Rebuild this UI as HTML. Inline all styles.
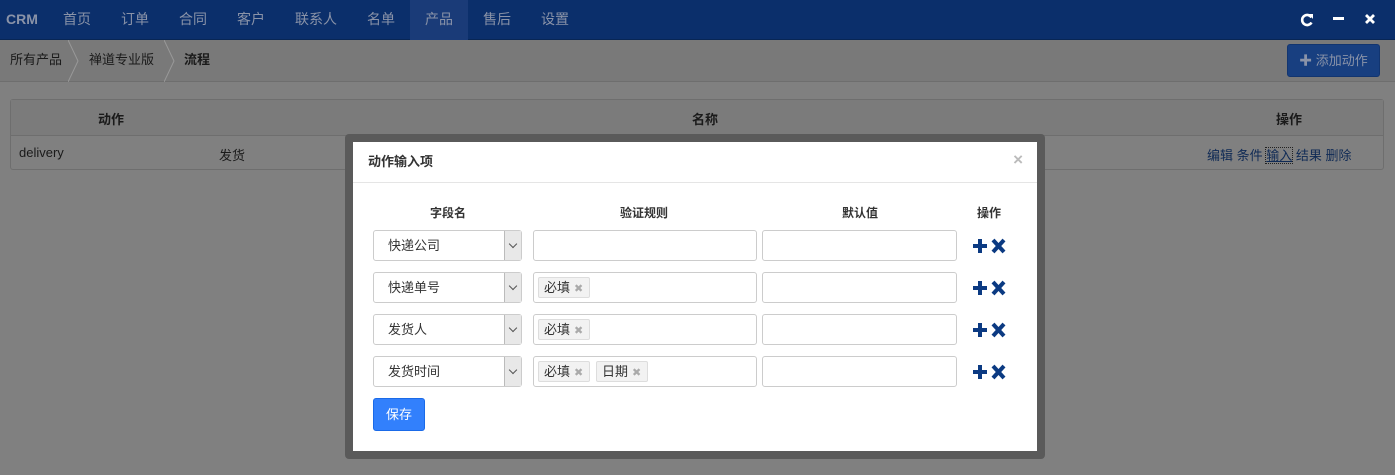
<!DOCTYPE html>
<html><head><meta charset="utf-8"><style>
*{box-sizing:border-box;margin:0;padding:0}
body{width:1395px;height:475px;overflow:hidden;position:relative;background:#808080;font-family:"Liberation Sans","Noto Sans CJK SC",sans-serif;font-size:13px;color:#1a1a1a}
.nav{position:absolute;left:0;top:0;width:1395px;height:40px;background:#0b2f6b;border-bottom:1px solid #082655}
.nav span{position:absolute;top:0;line-height:38px;font-size:14px;color:#8a93a8}
.bc{position:absolute;left:0;top:40px;width:1395px;height:42px;background:#797979;border-bottom:1px solid #6e6e6e}
.bc span{position:absolute;top:0;line-height:40px;font-size:13px}
.tbl{position:absolute;left:10px;top:99px;width:1374px;height:71px;border:1px solid #6e6e6e;border-radius:3px;background:#808080}
.tbl .h{height:36px;border-bottom:1px solid #6e6e6e;background:#7b7b7b}
.tbl b,.tbl i{position:absolute;font-style:normal}
.mw{position:absolute;left:345px;top:134px;width:700px;height:325px;background:#5a5a5a;border-radius:4px}
.m{position:absolute;left:353px;top:142px;width:684px;height:309px;background:#fff;color:#333}
.m .hd{height:41px;border-bottom:1px solid #e5e5e5;font-weight:bold;padding-left:15px;line-height:40px}
.ab{position:absolute}
.th{position:absolute;top:62px;font-weight:bold;font-size:12px}
.sel,.inp{position:absolute;height:31px;border:1px solid #ccc;border-radius:3px;background:#fff}
.sel span{position:absolute;left:14px;line-height:29px}
.sel i{position:absolute;right:0;top:0;width:17px;height:29px;background:#e8e8e8;border-left:1px solid #bbb}
.sel i:after{content:"";position:absolute;left:5px;top:10px;width:5px;height:5px;border-right:1px solid #555;border-bottom:1px solid #555;transform:rotate(45deg)}
.tag{position:absolute;top:4px;height:21px;line-height:19px;padding:0 6px 0 5px;background:#f2f2f2;border:1px solid #ddd;border-radius:2px;font-size:13px}
.tag em{font-style:normal;color:#aaa;margin-left:4px;font-size:11px}
.ic{position:absolute;left:620px}
</style></head><body>
<div class="nav">
<span style="left:6px;font-weight:bold;color:#8a93a8">CRM</span>
<span style="left:63px">首页</span><span style="left:121px">订单</span><span style="left:179px">合同</span><span style="left:237px">客户</span><span style="left:295px">联系人</span><span style="left:367px">名单</span>
<div style="position:absolute;left:410px;top:0;width:58px;height:40px;background:#1a3b78"></div>
<span style="left:425px">产品</span><span style="left:483px">售后</span><span style="left:541px">设置</span>
<svg style="position:absolute;left:1300px;top:13px" width="14" height="14"><path d="M11.5 4.5 A5 5 0 1 0 11.5 9.5" stroke="#fff" stroke-width="2.6" fill="none"/><path d="M9 1 L13 1 L13 6 Z" fill="#fff"/></svg>
<div style="position:absolute;left:1333px;top:17px;width:11px;height:3px;background:#fff"></div>
<svg style="position:absolute;left:1365px;top:14px" width="10" height="10"><path d="M1 1 L9 9 M9 1 L1 9" stroke="#fff" stroke-width="2.8"/></svg>
</div>
<div class="bc">
<span style="left:10px">所有产品</span>
<svg style="position:absolute;left:68px;top:0" width="20" height="42"><path d="M0 0 L10 21 L0 42" stroke="#999" fill="none"/></svg>
<span style="left:89px">禅道专业版</span>
<svg style="position:absolute;left:164px;top:0" width="20" height="42"><path d="M0 0 L10 21 L0 42" stroke="#999" fill="none"/></svg>
<span style="left:184px;font-weight:bold">流程</span>
<div style="position:absolute;left:1287px;top:4px;width:93px;height:33px;background:#183f80;border:1px solid #123570;border-radius:3px;color:#8a93a8;line-height:31px;text-align:center;font-size:13px"><b>✚</b> 添加动作</div>
</div>
<div class="tbl"><div class="h"></div>
<b style="left:87px;top:9px">动作</b><b style="left:681px;top:9px">名称</b><b style="left:1265px;top:9px">操作</b>
<i style="left:8px;top:45px">delivery</i><i style="left:208px;top:45px">发货</i>
<i style="left:1196px;top:45px;color:#0f2a55">编辑 条件 <u style="outline:1px dotted #222">输入</u> 结果 删除</i>
</div>
<div class="mw"></div>
<div class="m">
<div class="hd">动作输入项</div>
<div class="ab" style="right:14px;top:8px;color:#bbb;font-size:17px;font-weight:bold">×</div>
<div class="th" style="left:77px">字段名</div><div class="th" style="left:267px">验证规则</div><div class="th" style="left:489px">默认值</div><div class="th" style="left:624px">操作</div>

<div class="sel" style="left:20px;top:88px;width:149px"><span>快递公司</span><i></i></div>
<div class="inp" style="left:180px;top:88px;width:224px"></div>
<div class="inp" style="left:409px;top:88px;width:195px"></div>
<svg class="ic" style="top:96px" width="34" height="16"><path d="M7 1 V15 M0 8 H14" stroke="#0b3a82" stroke-width="4"/><path d="M20 2 L31 14 M31 2 L20 14" stroke="#0b3a82" stroke-width="4"/></svg>

<div class="sel" style="left:20px;top:130px;width:149px"><span>快递单号</span><i></i></div>
<div class="inp" style="left:180px;top:130px;width:224px"><div class="tag" style="left:4px">必填<em>✖</em></div></div>
<div class="inp" style="left:409px;top:130px;width:195px"></div>
<svg class="ic" style="top:138px" width="34" height="16"><path d="M7 1 V15 M0 8 H14" stroke="#0b3a82" stroke-width="4"/><path d="M20 2 L31 14 M31 2 L20 14" stroke="#0b3a82" stroke-width="4"/></svg>

<div class="sel" style="left:20px;top:172px;width:149px"><span>发货人</span><i></i></div>
<div class="inp" style="left:180px;top:172px;width:224px"><div class="tag" style="left:4px">必填<em>✖</em></div></div>
<div class="inp" style="left:409px;top:172px;width:195px"></div>
<svg class="ic" style="top:180px" width="34" height="16"><path d="M7 1 V15 M0 8 H14" stroke="#0b3a82" stroke-width="4"/><path d="M20 2 L31 14 M31 2 L20 14" stroke="#0b3a82" stroke-width="4"/></svg>

<div class="sel" style="left:20px;top:214px;width:149px"><span>发货时间</span><i></i></div>
<div class="inp" style="left:180px;top:214px;width:224px"><div class="tag" style="left:4px">必填<em>✖</em></div><div class="tag" style="left:62px">日期<em>✖</em></div></div>
<div class="inp" style="left:409px;top:214px;width:195px"></div>
<svg class="ic" style="top:222px" width="34" height="16"><path d="M7 1 V15 M0 8 H14" stroke="#0b3a82" stroke-width="4"/><path d="M20 2 L31 14 M31 2 L20 14" stroke="#0b3a82" stroke-width="4"/></svg>

<div class="ab" style="left:20px;top:256px;width:52px;height:33px;background:#3280fc;border:1px solid #1a6ae8;border-radius:3px;color:#fff;line-height:31px;text-align:center">保存</div>
</div>
</body></html>
